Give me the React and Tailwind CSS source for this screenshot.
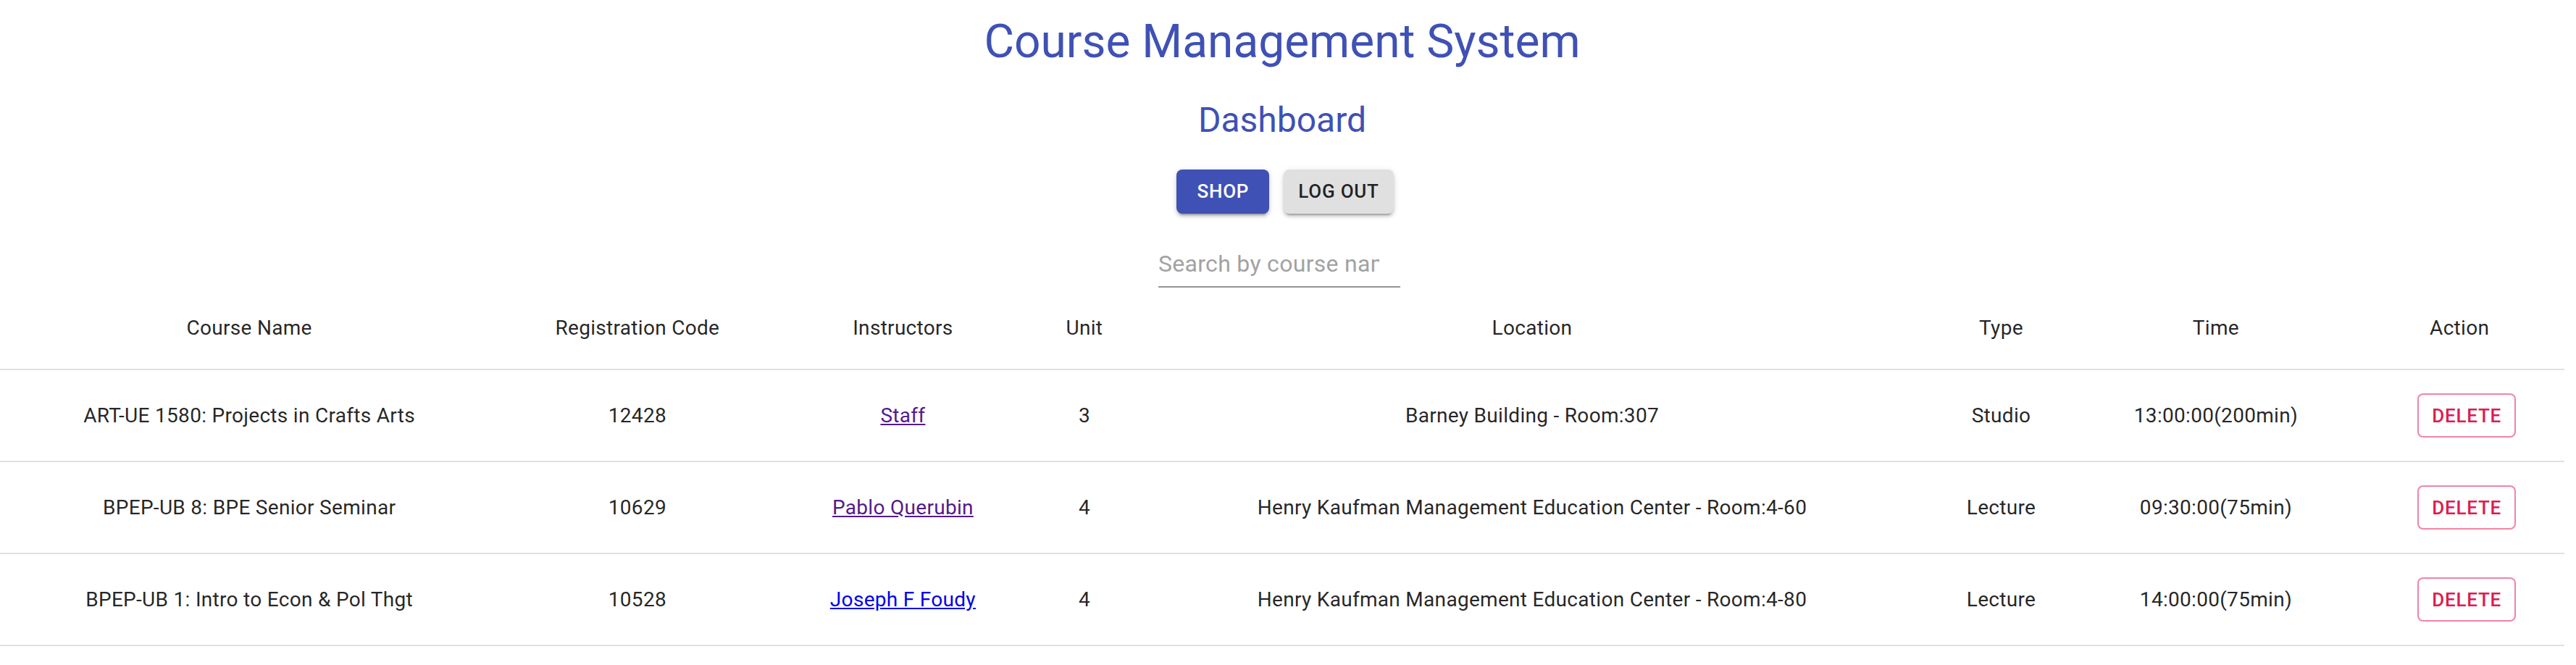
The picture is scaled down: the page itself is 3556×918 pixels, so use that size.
import React, { useState } from 'react';

const courses = [
  {
    name: 'ART-UE 1580: Projects in Crafts Arts',
    code: '12428',
    instructor: 'Staff',
    visited: true,
    unit: '3',
    location: 'Barney Building - Room:307',
    type: 'Studio',
    time: '13:00:00(200min)'
  },
  {
    name: 'BPEP-UB 8: BPE Senior Seminar',
    code: '10629',
    instructor: 'Pablo Querubin',
    visited: true,
    unit: '4',
    location: 'Henry Kaufman Management Education Center - Room:4-60',
    type: 'Lecture',
    time: '09:30:00(75min)'
  },
  {
    name: 'BPEP-UB 1: Intro to Econ & Pol Thgt',
    code: '10528',
    instructor: 'Joseph F Foudy',
    visited: false,
    unit: '4',
    location: 'Henry Kaufman Management Education Center - Room:4-80',
    type: 'Lecture',
    time: '14:00:00(75min)'
  }
];

const headers = ['Course Name', 'Registration Code', 'Instructors', 'Unit', 'Location', 'Type', 'Time', 'Action'];

const App = () => {
  const [search, setSearch] = useState('');
  const [rows, setRows] = useState(courses);

  const shown = rows.filter(c => c.name.toLowerCase().includes(search.toLowerCase()));

  return (
    <div className="w-[3540px] bg-white text-center font-['Roboto',sans-serif] text-[rgba(0,0,0,0.87)]">
      <h4 className="pt-[18px] text-[64px] leading-[79px] font-normal text-[#3f51b5]">
        Course Management System
      </h4>
      <h5 className="mt-[37px] text-[48px] leading-[64px] font-normal text-[#3f51b5]">
        Dashboard
      </h5>

      {/* Buttons */}
      <div className="mt-[36px] flex justify-center gap-[20px] pl-[8px]">
        <button className="h-[61px] min-w-[128px] px-[20px] rounded-[8px] bg-[#3f51b5] text-white text-[26px] font-medium uppercase tracking-[0.02857em] shadow-[0_6px_2px_-4px_rgba(0,0,0,0.2),0_4px_4px_0_rgba(0,0,0,0.14),0_2px_10px_0_rgba(0,0,0,0.12)]">
          Shop
        </button>
        <button className="h-[61px] min-w-[128px] px-[20px] rounded-[8px] bg-[#e0e0e0] text-[rgba(0,0,0,0.87)] text-[26px] font-medium uppercase tracking-[0.02857em] shadow-[0_6px_2px_-4px_rgba(0,0,0,0.2),0_4px_4px_0_rgba(0,0,0,0.14),0_2px_10px_0_rgba(0,0,0,0.12)]">
          Log out
        </button>
      </div>

      {/* Search */}
      <div className="mt-[38px] flex justify-center pr-[8px]">
        <div className="w-[334px] border-b-2 border-[rgba(0,0,0,0.42)]">
          <input
            type="text"
            value={search}
            onChange={e => setSearch(e.target.value)}
            placeholder="Search by course name"
            className="block w-full h-[62px] pt-[8px] pb-[8px] pr-[29px] text-[32px] leading-[46px] tracking-[0.00938em] outline-none placeholder:text-[#a2a2a2] text-[rgba(0,0,0,0.87)]"
          />
        </div>
      </div>

      {/* Course table */}
      <table className="w-full border-collapse text-[28px] tracking-[0.01071em]">
        <thead>
          <tr>
            {headers.map(h => (
              <th
                key={h}
                className="p-[32px] leading-[48px] font-normal border-b-2 border-[#e0e0e0]"
              >
                {h}
              </th>
            ))}
          </tr>
        </thead>
        <tbody>
          {shown.map(c => (
            <tr key={c.code}>
              <td className="px-[32px] py-[32px] leading-[40px] border-b-2 border-[#e0e0e0]">{c.name}</td>
              <td className="px-[32px] py-[32px] leading-[40px] border-b-2 border-[#e0e0e0]">{c.code}</td>
              <td className="px-[32px] py-[32px] leading-[40px] border-b-2 border-[#e0e0e0]">
                <a href="#" className={c.visited ? 'underline text-[#551a8b]' : 'underline text-[#0000ee]'}>
                  {c.instructor}
                </a>
              </td>
              <td className="px-[32px] py-[32px] leading-[40px] border-b-2 border-[#e0e0e0]">{c.unit}</td>
              <td className="px-[32px] py-[32px] leading-[40px] border-b-2 border-[#e0e0e0]">{c.location}</td>
              <td className="px-[32px] py-[32px] leading-[40px] border-b-2 border-[#e0e0e0]">{c.type}</td>
              <td className="px-[32px] py-[32px] leading-[40px] border-b-2 border-[#e0e0e0]">{c.time}</td>
              <td className="px-[32px] py-[32px] leading-[40px] border-b-2 border-[#e0e0e0]">
                <button
                  onClick={() => setRows(prev => prev.filter(r => r.code !== c.code))}
                  className="ml-[20px] h-[61px] min-w-[128px] px-[18px] align-middle rounded-[8px] border-2 border-[#ef85a4] text-[#dc1c50] text-[26px] font-medium uppercase tracking-[0.02857em]"
                >
                  Delete
                </button>
              </td>
            </tr>
          ))}
        </tbody>
      </table>
    </div>
  );
};

export default App;
